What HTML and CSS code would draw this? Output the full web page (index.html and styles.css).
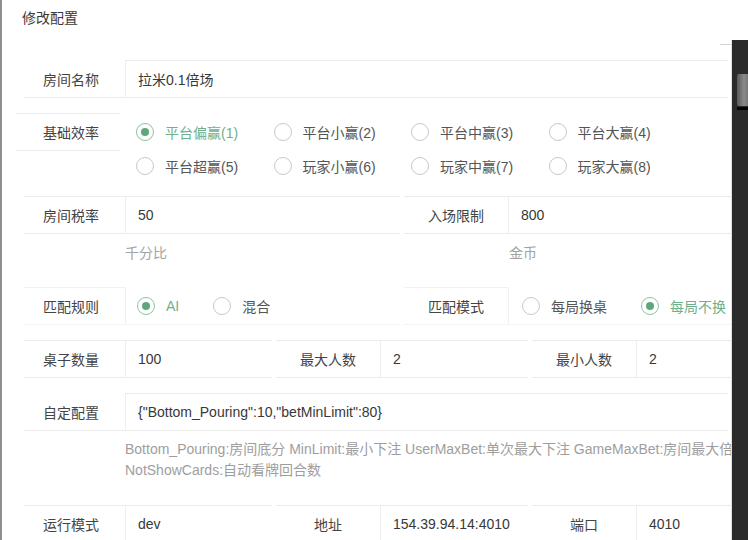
FILE: index.html
```html
<!DOCTYPE html>
<html lang="zh">
<head>
<meta charset="utf-8">
<title>修改配置</title>
<link rel="stylesheet" href="styles.css">
</head>
<body>
<div class="page">
  <div class="title">修改配置</div>
  <div class="form">
    <div class="row row-name">
      <div class="field field-full">
        <div class="lbl">房间名称</div>
        <div class="val">拉米0.1倍场</div>
      </div>
    </div>

    <div class="row row-base">
      <div class="lbl lbl-box">基础效率</div>
      <div class="radio-grid">
        <span class="radio on"><i></i>平台偏赢(1)</span>
        <span class="radio"><i></i>平台小赢(2)</span>
        <span class="radio"><i></i>平台中赢(3)</span>
        <span class="radio"><i></i>平台大赢(4)</span>
        <span class="radio"><i></i>平台超赢(5)</span>
        <span class="radio"><i></i>玩家小赢(6)</span>
        <span class="radio"><i></i>玩家中赢(7)</span>
        <span class="radio"><i></i>玩家大赢(8)</span>
      </div>
    </div>

    <div class="row row-tax">
      <div class="field field-half">
        <div class="lbl">房间税率</div>
        <div class="val">50</div>
      </div>
      <div class="field field-rest">
        <div class="lbl lbl-wide">入场限制</div>
        <div class="val">800</div>
      </div>
    </div>
    <div class="hints">
      <span class="hint hint-a">千分比</span>
      <span class="hint">金币</span>
    </div>

    <div class="row row-match">
      <div class="field field-half field-radio">
        <div class="lbl">匹配规则</div>
        <div class="val">
          <span class="radio inline on"><i></i>AI</span>
          <span class="radio inline"><i></i>混合</span>
        </div>
      </div>
      <div class="field field-rest field-radio">
        <div class="lbl lbl-wide">匹配模式</div>
        <div class="val">
          <span class="radio inline"><i></i>每局换桌</span>
          <span class="radio inline on"><i></i>每局不换</span>
        </div>
      </div>
    </div>

    <div class="row row-three">
      <div class="field field-third">
        <div class="lbl">桌子数量</div>
        <div class="val">100</div>
      </div>
      <div class="field field-third2">
        <div class="lbl lbl-wide">最大人数</div>
        <div class="val">2</div>
      </div>
      <div class="field field-rest">
        <div class="lbl lbl-wide">最小人数</div>
        <div class="val">2</div>
      </div>
    </div>

    <div class="row row-custom">
      <div class="field field-full">
        <div class="lbl">自定配置</div>
        <div class="val">{"Bottom_Pouring":10,"betMinLimit":80}</div>
      </div>
    </div>
    <div class="hint-long">Bottom_Pouring:房间底分 MinLimit:最小下注 UserMaxBet:单次最大下注 GameMaxBet:房间最大倍数 NotShowCards:自动看牌回合数</div>

    <div class="row row-run">
      <div class="field field-third">
        <div class="lbl">运行模式</div>
        <div class="val">dev</div>
      </div>
      <div class="field field-third2">
        <div class="lbl lbl-wide">地址</div>
        <div class="val">154.39.94.14:4010</div>
      </div>
      <div class="field field-rest">
        <div class="lbl lbl-wide">端口</div>
        <div class="val">4010</div>
      </div>
    </div>
  </div>

  <div class="side-tick"></div>
  <div class="side-panel">
    <div class="side-blob"></div>
    <div class="side-bar"></div>
  </div>
</div>
</body>
</html>
```

FILE: styles.css
```css
* { box-sizing: border-box; }
html, body { margin: 0; padding: 0; }
body {
  width: 748px;
  height: 540px;
  overflow: hidden;
  background: #fff;
  font-family: "Liberation Sans", "Noto Sans CJK SC", sans-serif;
  font-size: 14px;
  color: #3a3a3a;
}
.page {
  position: relative;
  height: 540px;
  border-left: 2px solid #8e8e8e;
  overflow: hidden;
}
.title {
  height: 36px;
  line-height: 36px;
  padding-left: 20px;
  color: #3a3a3a;
}
.form {
  width: 800px;
  padding-left: 22px;
}
.row { display: flex; }
.field {
  display: flex;
  height: 38px;
  border-bottom: 1px solid #ebebeb;
}
.lbl {
  flex: none;
  width: 101px;
  padding-right: 7px;
  display: flex;
  align-items: center;
  justify-content: center;
  color: #444;
  border-top: 1px solid #ebebeb;
}
.row-name .lbl, .row-custom .lbl { border-top-color: #fff; }
.lbl-wide { width: 104px; padding-right: 0; }
.val {
  flex: 1;
  display: flex;
  align-items: center;
  padding-left: 12px;
  border-left: 1px solid #eeeeee;
  border-top: 1px solid #ebebeb;
  color: #383838;
  white-space: nowrap;
}
.field-full { width: 704px; }
.field-half { width: 376px; margin-right: 4px; }
.field-rest { flex: 1; }
.field-third { width: 248px; margin-right: 4px; }
.field-third2 { width: 252px; margin-right: 4px; }

.row-name { margin-top: 24px; }
.row-base { margin-top: 15px; align-items: flex-start; }
.row-tax { margin-top: 13px; }
.row-match { margin-top: 24px; }
.row-three { margin-top: 15px; }
.row-custom { margin-top: 15px; }
.row-run { margin-top: 24px; }

.lbl-box {
  margin-left: -8px;
  width: 104px;
  height: 38px;
  padding-right: 0;
  padding-left: 6px;
  border-top: 1px solid #ebebeb;
  border-bottom: 1px solid #ebebeb;
}
.radio-grid {
  margin-top: 2px;
  padding-left: 16px;
  display: grid;
  grid-template-columns: repeat(4, 137.5px);
  grid-auto-rows: 34px;
}
.radio {
  display: flex;
  align-items: center;
  color: #555;
  white-space: nowrap;
}
.radio i {
  flex: none;
  width: 18px;
  height: 18px;
  margin-right: 11px;
  border: 1px solid #c9c9c9;
  border-radius: 50%;
  position: relative;
}
.radio.on { color: #6db08b; }
.radio.on i { border-color: #8dc3a3; }
.radio.on i::after {
  content: "";
  position: absolute;
  left: 4px;
  top: 4px;
  width: 8px;
  height: 8px;
  border-radius: 50%;
  background: #5ea77d;
}
.radio.inline { margin-right: 34px; }

.field-radio { border-bottom-color: #f3f3f3; }
.field-radio .lbl { border-top-color: #f1f1f1; }
.field-radio .val { padding-left: 11px; border-left-color: #f0f0f0; border-top-color: #fff; }
.field-rest.field-radio .val { padding-left: 13px; }

.hints {
  display: flex;
  margin-top: 9px;
  line-height: 20px;
  padding-left: 101px;
}
.hint { color: #a3a3a3; }
.hint-a { width: 384px; }
.hint-long {
  margin-top: 8px;
  margin-left: 101px;
  width: 660px;
  line-height: 21px;
  color: #9e9e9e;
}

.side-tick {
  position: absolute;
  left: 718px;
  top: 44px;
  width: 12px;
  height: 1px;
  background: #d6d6d6;
}
.side-panel {
  position: absolute;
  left: 729px;
  top: 40px;
  width: 20px;
  height: 500px;
  background: #2b2b2b;
  border-left: 1px solid #e2e2e2;
}
.side-blob {
  position: absolute;
  left: 5px;
  top: 34px;
  width: 14px;
  height: 32px;
  background: linear-gradient(90deg, #5a5a5a, #8a8a8a 50%, #6a6a6a);
  border-radius: 2px;
}
.side-bar {
  position: absolute;
  left: 5px;
  top: 67px;
  width: 14px;
  height: 3px;
  background: #050505;
}
```
